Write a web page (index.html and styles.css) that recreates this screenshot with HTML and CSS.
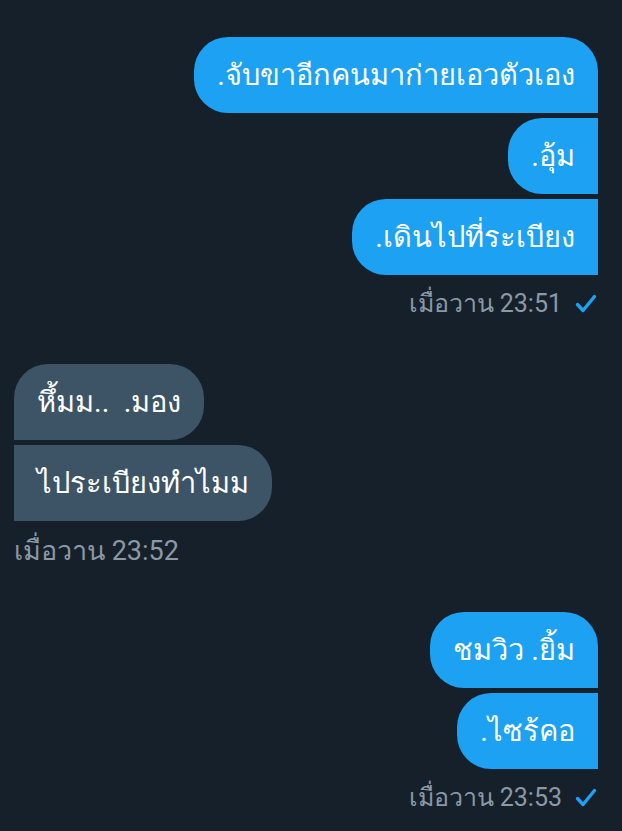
FILE: index.html
```html
<!DOCTYPE html>
<html lang="th">
<head>
<meta charset="utf-8">
<link rel="stylesheet" href="styles.css">
</head>
<body>
<div class="chat">
  <div class="group sent">
    <div class="bubble first">.จับขาอีกคนมาก่ายเอวตัวเอง</div>
    <div class="bubble mid">.อุ้ม</div>
    <div class="bubble last">.เดินไปที่ระเบียง</div>
    <div class="meta">เมื่อวาน 23:51
      <svg class="check" viewBox="0 0 24 24" width="24" height="24"><path d="M3.5 12.5 L9 18.5 L20.5 4.5" fill="none" stroke="#1da1f2" stroke-width="3.4" stroke-linecap="round" stroke-linejoin="round"/></svg>
    </div>
  </div>
  <div class="group received">
    <div class="bubble first">หึ้มม..&nbsp; .มอง</div>
    <div class="bubble last">ไประเบียงทำไมม</div>
    <div class="meta">เมื่อวาน 23:52</div>
  </div>
  <div class="group sent">
    <div class="bubble first">ชมวิว .ยิ้ม</div>
    <div class="bubble last">.ไซร้คอ</div>
    <div class="meta">เมื่อวาน 23:53
      <svg class="check" viewBox="0 0 24 24" width="24" height="24"><path d="M3.5 12.5 L9 18.5 L20.5 4.5" fill="none" stroke="#1da1f2" stroke-width="3.4" stroke-linecap="round" stroke-linejoin="round"/></svg>
    </div>
  </div>
</div>
</body>
</html>
```
FILE: styles.css
```css
html, body {
  margin: 0;
  padding: 0;
  background: #15202b;
}
body {
  font-family: Roboto, "Noto Sans", sans-serif;
  color: #ffffff;
  width: 622px;
  height: 831px;
  overflow: hidden;
}
.chat {
  display: flex;
  flex-direction: column;
  padding: 37px 24px 0 14px;
  gap: 45px;
}
.group {
  display: flex;
  flex-direction: column;
  gap: 5px;
}
.sent { align-items: flex-end; }
.received { align-items: flex-start; }
.bubble {
  font-size: 29px;
  line-height: 36px;
  padding: 20px 23px;
  border-radius: 34px;
  white-space: nowrap;
}
.sent .bubble { background: #1da1f2; }
.received .bubble { background: #3d5466; }
.sent .bubble.first { border-bottom-right-radius: 0; }
.sent .bubble.mid { border-top-right-radius: 0; border-bottom-right-radius: 0; }
.sent .bubble.last { border-top-right-radius: 0; border-bottom-right-radius: 0; }
.received .bubble.first { border-bottom-left-radius: 0; }
.received .bubble.last { border-top-left-radius: 0; border-bottom-left-radius: 0; }
.meta {
  margin-top: 9px;
  font-size: 25px;
  line-height: 30px;
  color: #8b98a5;
  display: flex;
  align-items: center;
  gap: 12px;
}
.received .meta {
  font-size: 27px;
  margin-top: 10px;
  margin-bottom: 1px;
}
.check { display: block; }
```
